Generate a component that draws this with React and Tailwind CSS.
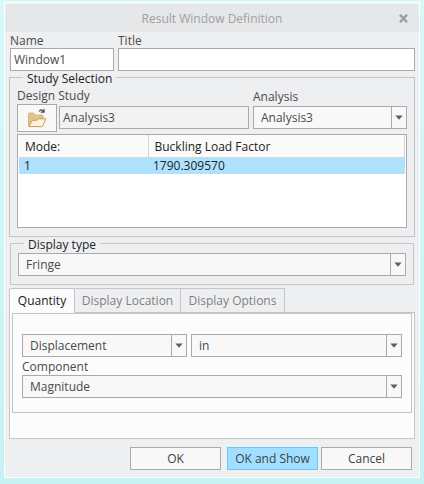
import { useState } from "react";

function Select({ label, className = "", children }) {
  return (
    <div
      className={`grid h-[23px] grid-cols-[minmax(0,1fr)_15px] border border-[#a9aaab] bg-[#f8f8f8] ${className}`}
    >
      <select
        {...label}
        className="col-span-2 col-start-1 row-start-1 w-full appearance-none bg-transparent pr-4 pl-[7px] text-[#4a4a4a] outline-none"
      >
        {children}
      </select>
      <span className="pointer-events-none col-start-2 row-start-1 flex items-center justify-center border-l border-[#a9aaab]">
        <svg width="8" height="5" viewBox="0 0 8 5" aria-hidden="true">
          <path d="M0.3 0.5h7.4L4 4.7z" fill="#5d5f61" />
        </svg>
      </span>
    </div>
  );
}

function FolderIcon() {
  return (
    <svg width="20" height="20" viewBox="0 0 20 20" aria-hidden="true">
      <path
        d="M1.5 18V6.2q0-1.2 1.2-1.2h3.6q.7 0 1 .7l.6 1.5h7.3q1 0 1 1v3.5L13 18.3z"
        fill="#e0c48c"
        stroke="#cba968"
        strokeWidth=".8"
      />
      <path
        d="M2 18.6 4.9 13q.3-.6 1-.6h3.4l2-1.6h7.6l-3 7.1q-.3.7-1 .7z"
        fill="#fdf1d8"
        stroke="#c09a58"
        strokeWidth=".9"
      />
      <path d="M12.3 3.6q.8-2.2 3.4-1.3" fill="none" stroke="#55575a" strokeWidth="1.4" />
      <path d="M17.6.6v4.2h-4.2z" fill="#4b4d50" />
    </svg>
  );
}

const tabs = ["Quantity", "Display Location", "Display Options"];

const field =
  "h-[23px] w-full min-w-0 border border-[#a9aaab] px-[3px] text-[#4a4a4a] outline-none";
const button = "h-[23px] w-[91px] border text-[#3f3f3f]";
const group = "min-w-0 border border-[#c3c5c8]";
const legend = "h-3 px-1 leading-4 text-[#222]";

export default function App() {
  const [tab, setTab] = useState(0);
  return (
    <div className="min-h-screen bg-linear-to-b from-[#d6f9fa] to-[#c6f2f3] px-1 pt-[2px] pb-[6px] font-['Open_Sans','Noto_Sans',sans-serif] text-[12px] leading-4 text-[#4a4a4a]">
      <main className="border border-white bg-[#eeeff1] pb-[7px]">
        <header className="mt-px grid h-7 grid-cols-[24px_1fr_24px] items-center bg-[#e6e7e9] pr-1 text-[#9fa0a2]">
          <h1 className="col-start-2 pt-px pl-1 text-center">Result Window Definition</h1>
          <button type="button" aria-label="Close" className="flex justify-center">
            <svg width="9" height="9" viewBox="0 0 9 9" aria-hidden="true">
              <path d="M1 .8 8 8.2M8 .8 1 8.2" stroke="#9b9c9e" strokeWidth="2.4" />
            </svg>
          </button>
        </header>

        <div className="grid grid-cols-[104px_1fr] gap-x-1 pr-1 pl-[5px]">
          <div>
            <label htmlFor="name" className="block pt-px leading-[15px]">Name</label>
            <input id="name" defaultValue="Window1" className={`${field} block bg-white`} />
          </div>
          <div>
            <label htmlFor="title" className="block pt-px leading-[15px]">Title</label>
            <input id="title" className={`${field} block bg-white`} />
          </div>
        </div>

        <div className="px-1">
          <fieldset className={`${group} px-[7px] pb-2`}>
            <legend className={`${legend} ml-[6px]`}>Study Selection</legend>
            <div className="mt-[3px] grid grid-cols-[40px_minmax(0,1fr)_156px] gap-x-[2px]">
              <label htmlFor="study" className="col-span-2 whitespace-nowrap pt-[2px]">Design Study</label>
              <label htmlFor="analysis" className="ml-[2px] pt-1 leading-[14px]">Analysis</label>
              <button
                type="button"
                aria-label="Open design study"
                className="flex h-7 items-center justify-center border border-[#a9aaab] bg-[#f8f8f8]"
              >
                <FolderIcon />
              </button>
              <div className="pt-[2px]">
                <input id="study" readOnly defaultValue="Analysis3" className={`${field} block bg-[#f2f2f3]`} />
              </div>
              <Select label={{ id: "analysis" }} className="mt-[2px] ml-[2px]">
                <option>Analysis3</option>
              </Select>
            </div>
            <div className="mt-[2px] h-[94px] border border-[#a9aaab] bg-white px-px">
              <table className="w-full table-fixed border-collapse text-left text-[#222]">
                <thead>
                  <tr className="h-[22px] border-b border-[#d5d5d5] bg-[#fafafa]">
                    <th className="w-[129px] border-r border-[#d5d5d5] pt-[2px] pl-[6px] font-normal">Mode:</th>
                    <th className="border-r border-[#d5d5d5] pt-[2px] pl-[6px] font-normal">Buckling Load Factor</th>
                  </tr>
                </thead>
                <tbody>
                  <tr className="h-[17px] bg-[#afe2ff]">
                    <td className="pl-[5px]">1</td>
                    <td className="pl-[5px]">1790.309570</td>
                  </tr>
                </tbody>
              </table>
            </div>
          </fieldset>

          <fieldset className={`${group} mx-px px-[7px] pb-2`}>
            <legend className={`${legend} ml-[6px]`}>Display type</legend>
            <Select label={{ "aria-label": "Display type" }} className="mt-1">
              <option>Fringe</option>
            </Select>
          </fieldset>

          <div role="tablist" className="mt-[3px] grid h-6 grid-cols-[66px_106px_104px]">
            {tabs.map((name, i) => (
              <button
                key={name}
                type="button"
                role="tab"
                aria-selected={tab === i}
                onClick={() => setTab(i)}
                className={`border-t border-r border-[#c3c5c8] whitespace-nowrap first:border-l ${
                  tab === i ? "-mb-px rounded-t-xs bg-[#fcfcfc] pb-px text-[#222]" : "text-[#7d7f85]"
                }`}
              >
                {name}
              </button>
            ))}
          </div>
          <section role="tabpanel" aria-label={tabs[tab]} className="border border-[#c3c5c8] bg-[#fcfcfc] px-[2px] pb-[25px]">
            <div className="border border-[#c3c5c8] px-[9px] pt-5 pb-[14px]">
              <div className="grid grid-cols-[165px_1fr] gap-x-1">
                <Select label={{ "aria-label": "Quantity" }}>
                  <option>Displacement</option>
                </Select>
                <Select label={{ "aria-label": "Units" }}>
                  <option>in</option>
                </Select>
              </div>
              <label htmlFor="component" className="mt-[2px] block">Component</label>
              <Select label={{ id: "component" }}>
                <option>Magnitude</option>
              </Select>
            </div>
          </section>

          <footer className="mt-2 flex justify-end pr-[3px]">
            <button type="button" className={`${button} mr-[6px] border-[#a9aaab] bg-[#f8f8f8]`}>OK</button>
            <button type="button" className={`${button} mr-[3px] border-[#6cc6f5] bg-[#a0dfff]`}>OK and Show</button>
            <button type="button" className={`${button} border-[#a9aaab] bg-[#f8f8f8]`}>Cancel</button>
          </footer>
        </div>
      </main>
    </div>
  );
}
